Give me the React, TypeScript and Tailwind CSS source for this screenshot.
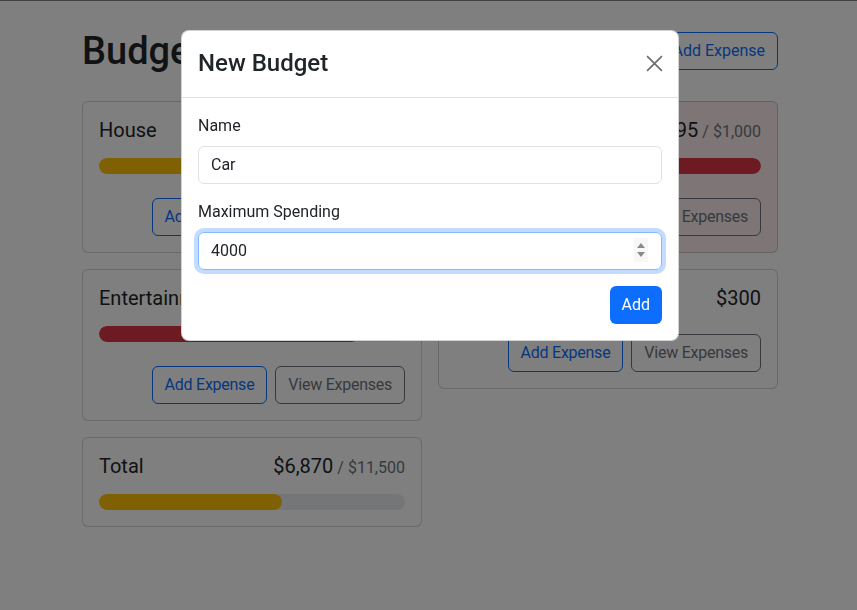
import React from 'react';

type Budget = {
  name: string;
  amount: number;
  max?: number;
};

const BUDGETS: Budget[] = [
  { name: 'House', amount: 1300, max: 2000 },
  { name: 'Food', amount: 1095, max: 1000 },
  { name: 'Entertainment', amount: 5100, max: 6000 },
  { name: 'Uncategorized', amount: 300 },
];

const TOTAL = { amount: 6870, max: 11500 };

const fmt = (n: number) => '$' + n.toLocaleString('en-US');

function barColor(ratio: number) {
  if (ratio < 0.5) return 'bg-[#0d6efd]';
  if (ratio < 0.75) return 'bg-[#ffc107]';
  return 'bg-[#dc3545]';
}

function Progress({ amount, max }: { amount: number; max: number }) {
  const ratio = amount / max;
  return (
    <div className="h-4 overflow-hidden rounded-full bg-[#e9ecef]">
      <div className={`h-full rounded-full ${barColor(ratio)}`} style={{ width: `${Math.min(ratio, 1) * 100}%` }} />
    </div>
  );
}

function BudgetCard({ budget, hideButtons }: { budget: Budget; hideButtons?: boolean }) {
  const over = budget.max !== undefined && budget.amount > budget.max;
  return (
    <div
      className={`rounded-md border border-[rgba(0,0,0,0.175)] p-4 ${over ? 'bg-[#fbebec]' : 'bg-white'}`}
    >
      <div className="mb-4 flex h-6 items-baseline justify-between text-xl leading-6">
        <div>{budget.name}</div>
        <div className="flex items-baseline">
          {fmt(budget.amount)}
          {budget.max !== undefined && (
            <span className="ml-1 text-base leading-6 text-[#6c757d]">/ {fmt(budget.max)}</span>
          )}
        </div>
      </div>
      {budget.max !== undefined && <Progress amount={budget.amount} max={budget.max} />}
      {!hideButtons && (
        <div className="mt-6 flex justify-end gap-2 tracking-[-0.25px]">
          <button className="h-[38px] rounded-md border border-[#0d6efd] px-3 text-[#0d6efd]">Add Expense</button>
          <button className="h-[38px] rounded-md border border-[#6c757d] px-3 text-[#6c757d]">View Expenses</button>
        </div>
      )}
    </div>
  );
}

function NewBudgetModal() {
  return (
    <div className="fixed inset-0 bg-black/50">
      <div className="ml-[181px] mt-[30px] w-[498px] rounded-lg border border-[rgba(0,0,0,0.175)] bg-white">
        <div className="flex items-center justify-between border-b border-[#dee2e6] p-4">
          <div className="text-[24px] font-medium leading-[33.5px] text-[#212529]">New Budget</div>
          <button className="-mr-2 flex h-8 w-8 items-center justify-center" aria-label="Close">
            <svg width="17" height="17" viewBox="0 0 16 16" fill="none" stroke="#6e6e6e" strokeWidth="1.6">
              <path d="M1 1 15 15M15 1 1 15" />
            </svg>
          </button>
        </div>
        <div className="p-4">
          <div className="mb-4">
            <label className="mb-2 block leading-6">Name</label>
            <input
              readOnly
              value="Car"
              className="h-[38px] w-full rounded-md border border-[#dee2e6] px-3 text-[#212529] outline-none"
            />
          </div>
          <div className="mb-4">
            <label className="mb-2 block leading-6">Maximum Spending</label>
            <div className="relative">
              <input
                readOnly
                value="4000"
                className="h-[38px] w-full rounded-md border border-[#86b7fe] px-3 text-[#212529] shadow-[0_0_0_4px_rgba(13,110,253,0.25)] outline-none"
              />
              <div className="absolute right-[14px] top-[6px] flex h-[24px] w-[14px] flex-col items-center justify-center gap-[4px] bg-[#f7f7f7]">
                <svg width="8" height="5" viewBox="0 0 8 5">
                  <path d="M4 0 8 5H0Z" fill="#8a8a8a" />
                </svg>
                <svg width="8" height="5" viewBox="0 0 8 5">
                  <path d="M0 0H8L4 5Z" fill="#8a8a8a" />
                </svg>
              </div>
            </div>
          </div>
          <div className="flex justify-end">
            <button className="h-[38px] rounded-md bg-[#0d6efd] px-3 text-white">Add</button>
          </div>
        </div>
      </div>
    </div>
  );
}

export default function App() {
  return (
    <div className="relative h-[610px] overflow-hidden border-t border-[#808080] bg-white font-[Roboto,'Liberation_Sans',sans-serif] text-base text-[#212529]">
      <div className="ml-[82px] w-[696px] pt-[27px]">
        <div className="mb-[27px] flex items-center gap-2">
          <h1 className="mr-auto text-[38px] font-medium leading-[46px]">Budgets</h1>
          <button className="h-[38px] rounded-md border border-[#0d6efd] bg-[#0d6efd] px-3 text-white">Add Budget</button>
          <button className="h-[38px] rounded-md border border-[#0d6efd] px-3 text-[#0d6efd]">Add Expense</button>
        </div>
        <div className="grid grid-cols-2 items-start gap-4">
          {BUDGETS.map((b) => (
            <BudgetCard key={b.name} budget={b} />
          ))}
          <BudgetCard budget={{ name: 'Total', ...TOTAL }} hideButtons />
        </div>
      </div>
      <NewBudgetModal />
    </div>
  );
}
